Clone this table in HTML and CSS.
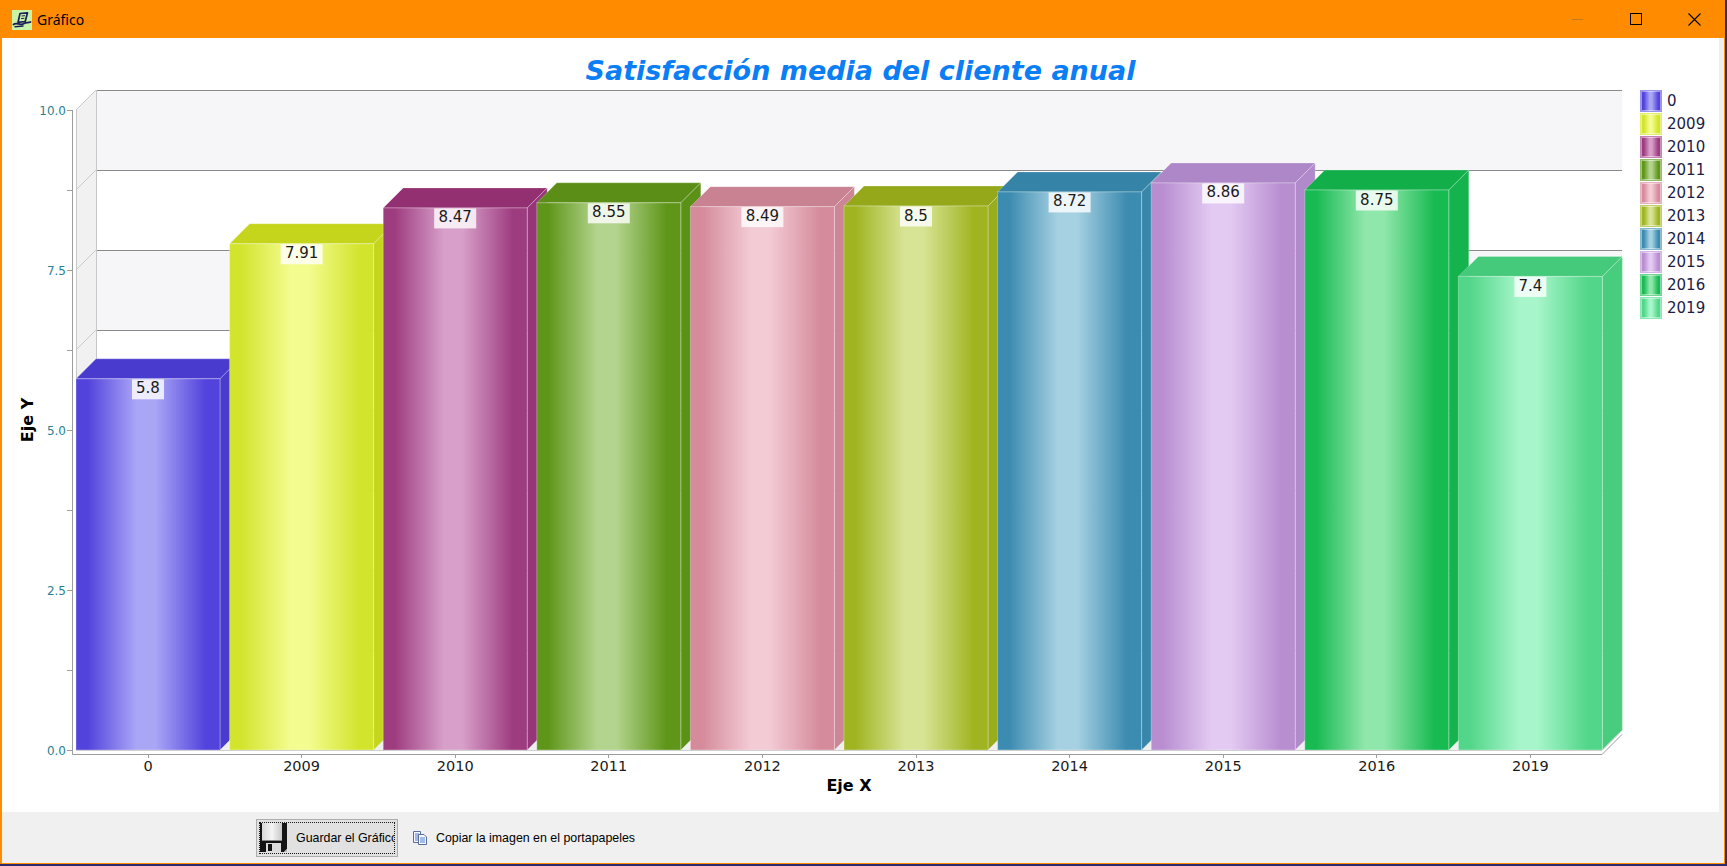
FILE: index.html
```html
<!DOCTYPE html>
<html lang="es">
<head>
<meta charset="utf-8">
<title>Gráfico</title>
<link rel="stylesheet" href="styles.css">
</head>
<body>
<div class="window">
  <div class="titlebar">
    <svg class="app-icon" width="20" height="20" viewBox="0 0 20 20">
      <rect width="20" height="20" fill="#c9f3a6"/>
      <path d="M8 3.5 L15.5 2.8 L13.2 11.5 L6 12.4 Z" fill="none" stroke="#1b1d58" stroke-width="1.7" stroke-linejoin="round"/>
      <path d="M9.5 6 L13 5.7 M9 8.6 L12.3 8.3" stroke="#1b1d58" stroke-width="1"/>
      <path d="M1.5 14.5 C5 11.5 8 16.5 12 13.5 C14 12 16 13 18.5 12" fill="none" stroke="#1b1d58" stroke-width="1.8" stroke-linecap="round"/>
      <path d="M3 16.8 L11 16" stroke="#1b1d58" stroke-width="1.4" stroke-linecap="round"/>
    </svg>
    <span class="title-text">Gráfico</span>
    <div class="controls">
      <span class="ctl"><svg width="12" height="12" viewBox="0 0 12 12"><path d="M0 6.5 H11" stroke="#c9761c" stroke-width="1"/></svg></span>
      <span class="ctl"><svg width="12" height="12" viewBox="0 0 12 12"><rect x="0.5" y="0.5" width="11" height="11" fill="none" stroke="#000" stroke-width="1"/></svg></span>
      <span class="ctl"><svg width="13" height="13" viewBox="0 0 13 13"><path d="M0.5 0.5 L12.5 12.5 M12.5 0.5 L0.5 12.5" stroke="#000" stroke-width="1.1"/></svg></span>
    </div>
  </div>

  <div class="client">
    <div class="chart-panel">
      <h1 class="chart-title">Satisfacción media del cliente anual</h1>
      <div class="chart-row">
        <svg class="plot" width="1630" height="726" viewBox="2 86 1630 726">
          <defs>
            <linearGradient id="g0" x1="0" x2="1" y1="0" y2="0"><stop offset="0" stop-color="#5243dc"/><stop offset="0.08" stop-color="#5243dc"/><stop offset="0.42" stop-color="#aaa6f6"/><stop offset="0.55" stop-color="#aaa6f6"/><stop offset="0.9" stop-color="#5243dc"/><stop offset="1" stop-color="#5243dc"/></linearGradient>
            <linearGradient id="g1" x1="0" x2="1" y1="0" y2="0"><stop offset="0" stop-color="#d3e42d"/><stop offset="0.08" stop-color="#d3e42d"/><stop offset="0.42" stop-color="#f3fc8e"/><stop offset="0.55" stop-color="#f3fc8e"/><stop offset="0.9" stop-color="#d3e42d"/><stop offset="1" stop-color="#d3e42d"/></linearGradient>
            <linearGradient id="g2" x1="0" x2="1" y1="0" y2="0"><stop offset="0" stop-color="#9e3c80"/><stop offset="0.08" stop-color="#9e3c80"/><stop offset="0.42" stop-color="#d79fc9"/><stop offset="0.55" stop-color="#d79fc9"/><stop offset="0.9" stop-color="#9e3c80"/><stop offset="1" stop-color="#9e3c80"/></linearGradient>
            <linearGradient id="g3" x1="0" x2="1" y1="0" y2="0"><stop offset="0" stop-color="#5f9619"/><stop offset="0.08" stop-color="#5f9619"/><stop offset="0.42" stop-color="#b3d48e"/><stop offset="0.55" stop-color="#b3d48e"/><stop offset="0.9" stop-color="#5f9619"/><stop offset="1" stop-color="#5f9619"/></linearGradient>
            <linearGradient id="g4" x1="0" x2="1" y1="0" y2="0"><stop offset="0" stop-color="#d58b9b"/><stop offset="0.08" stop-color="#d58b9b"/><stop offset="0.42" stop-color="#f3cbd5"/><stop offset="0.55" stop-color="#f3cbd5"/><stop offset="0.9" stop-color="#d58b9b"/><stop offset="1" stop-color="#d58b9b"/></linearGradient>
            <linearGradient id="g5" x1="0" x2="1" y1="0" y2="0"><stop offset="0" stop-color="#a0b421"/><stop offset="0.08" stop-color="#a0b421"/><stop offset="0.42" stop-color="#d8e495"/><stop offset="0.55" stop-color="#d8e495"/><stop offset="0.9" stop-color="#a0b421"/><stop offset="1" stop-color="#a0b421"/></linearGradient>
            <linearGradient id="g6" x1="0" x2="1" y1="0" y2="0"><stop offset="0" stop-color="#3c8bb0"/><stop offset="0.08" stop-color="#3c8bb0"/><stop offset="0.42" stop-color="#a6d1e2"/><stop offset="0.55" stop-color="#a6d1e2"/><stop offset="0.9" stop-color="#3c8bb0"/><stop offset="1" stop-color="#3c8bb0"/></linearGradient>
            <linearGradient id="g7" x1="0" x2="1" y1="0" y2="0"><stop offset="0" stop-color="#b88ed1"/><stop offset="0.08" stop-color="#b88ed1"/><stop offset="0.42" stop-color="#e3caf2"/><stop offset="0.55" stop-color="#e3caf2"/><stop offset="0.9" stop-color="#b88ed1"/><stop offset="1" stop-color="#b88ed1"/></linearGradient>
            <linearGradient id="g8" x1="0" x2="1" y1="0" y2="0"><stop offset="0" stop-color="#18ba52"/><stop offset="0.08" stop-color="#18ba52"/><stop offset="0.42" stop-color="#90e7ab"/><stop offset="0.55" stop-color="#90e7ab"/><stop offset="0.9" stop-color="#18ba52"/><stop offset="1" stop-color="#18ba52"/></linearGradient>
            <linearGradient id="g9" x1="0" x2="1" y1="0" y2="0"><stop offset="0" stop-color="#52d689"/><stop offset="0.08" stop-color="#52d689"/><stop offset="0.42" stop-color="#a7f5ca"/><stop offset="0.55" stop-color="#a7f5ca"/><stop offset="0.9" stop-color="#52d689"/><stop offset="1" stop-color="#52d689"/></linearGradient>
          </defs>

          <!-- back wall -->
          <rect class="wall-white" x="96" y="90" width="1526" height="640"/>
          <rect class="band" x="96" y="90" width="1526" height="80"/>
          <rect class="band" x="96" y="250" width="1526" height="80"/>
          <rect class="band" x="96" y="410" width="1526" height="80"/>
          <rect class="band" x="96" y="570" width="1526" height="80"/>
          <!-- left wall -->
          <polygon class="side-wall" points="76,110 96,90 96,730 76,750"/>
          <!-- floor -->
          <polygon class="floor" points="76,750 96,730 1622,730 1602,750"/>
          <!-- grid lines -->
          <g class="grid">
            <path d="M96 90.5 H1622 M96 170.5 H1622 M96 250.5 H1622 M96 330.5 H1622 M96 410.5 H1622 M96 490.5 H1622 M96 570.5 H1622 M96 650.5 H1622 M96 730.5 H1622"/>
          </g>
          <g class="grid-side">
            <path d="M76 110 L96 90 M76 190 L96 170 M76 270 L96 250 M76 350 L96 330 M76 430 L96 410 M76 510 L96 490 M76 590 L96 570 M76 670 L96 650"/>
            <path d="M76.5 110 V750 M96.5 90 V730"/>
          </g>

          <!-- bars -->
          <g transform="translate(76 378.8)">
            <polygon class="face" fill="#4a3bcf" points="0,0 20,-20 164,-20 144,0"/>
            <polygon class="face" fill="#4a3bcf" points="144,0 164,-20 164,351.2 144,371.2"/>
            <rect class="front" fill="url(#g0)" width="144" height="371.2"/>
            <rect class="vbox" x="56" y="0.5" width="32" height="20"/>
            <text class="vlabel" x="72" y="14.5">5.8</text>
          </g>
          <g transform="translate(229.6 243.76)">
            <polygon class="face" fill="#c5d51c" points="0,0 20,-20 164,-20 144,0"/>
            <polygon class="face" fill="#c5d51c" points="144,0 164,-20 164,486.24 144,506.24"/>
            <rect class="front" fill="url(#g1)" width="144" height="506.24"/>
            <rect class="vbox" x="51" y="0.5" width="42" height="20"/>
            <text class="vlabel" x="72" y="14.5">7.91</text>
          </g>
          <g transform="translate(383.2 207.92)">
            <polygon class="face" fill="#923072" points="0,0 20,-20 164,-20 144,0"/>
            <polygon class="face" fill="#963578" points="144,0 164,-20 164,522.08 144,542.08"/>
            <rect class="front" fill="url(#g2)" width="144" height="542.08"/>
            <rect class="vbox" x="51" y="0.5" width="42" height="20"/>
            <text class="vlabel" x="72" y="14.5">8.47</text>
          </g>
          <g transform="translate(536.8 202.8)">
            <polygon class="face" fill="#5a8e16" points="0,0 20,-20 164,-20 144,0"/>
            <polygon class="face" fill="#5c9118" points="144,0 164,-20 164,527.2 144,547.2"/>
            <rect class="front" fill="url(#g3)" width="144" height="547.2"/>
            <rect class="vbox" x="51" y="0.5" width="42" height="20"/>
            <text class="vlabel" x="72" y="14.5">8.55</text>
          </g>
          <g transform="translate(690.4 206.64)">
            <polygon class="face" fill="#c98292" points="0,0 20,-20 164,-20 144,0"/>
            <polygon class="face" fill="#cd8696" points="144,0 164,-20 164,523.36 144,543.36"/>
            <rect class="front" fill="url(#g4)" width="144" height="543.36"/>
            <rect class="vbox" x="51" y="0.5" width="42" height="20"/>
            <text class="vlabel" x="72" y="14.5">8.49</text>
          </g>
          <g transform="translate(844 206)">
            <polygon class="face" fill="#94a81a" points="0,0 20,-20 164,-20 144,0"/>
            <polygon class="face" fill="#98ac1c" points="144,0 164,-20 164,524 144,544"/>
            <rect class="front" fill="url(#g5)" width="144" height="544"/>
            <rect class="vbox" x="56" y="0.5" width="32" height="20"/>
            <text class="vlabel" x="72" y="14.5">8.5</text>
          </g>
          <g transform="translate(997.6 191.92)">
            <polygon class="face" fill="#3584a7" points="0,0 20,-20 164,-20 144,0"/>
            <polygon class="face" fill="#3887ab" points="144,0 164,-20 164,538.08 144,558.08"/>
            <rect class="front" fill="url(#g6)" width="144" height="558.08"/>
            <rect class="vbox" x="51" y="0.5" width="42" height="20"/>
            <text class="vlabel" x="72" y="14.5">8.72</text>
          </g>
          <g transform="translate(1151.2 182.96)">
            <polygon class="face" fill="#ad87c7" points="0,0 20,-20 164,-20 144,0"/>
            <polygon class="face" fill="#b18acb" points="144,0 164,-20 164,547.04 144,567.04"/>
            <rect class="front" fill="url(#g7)" width="144" height="567.04"/>
            <rect class="vbox" x="51" y="0.5" width="42" height="20"/>
            <text class="vlabel" x="72" y="14.5">8.86</text>
          </g>
          <g transform="translate(1304.8 190)">
            <polygon class="face" fill="#12ae4a" points="0,0 20,-20 164,-20 144,0"/>
            <polygon class="face" fill="#14b34d" points="144,0 164,-20 164,540 144,560"/>
            <rect class="front" fill="url(#g8)" width="144" height="560"/>
            <rect class="vbox" x="51" y="0.5" width="42" height="20"/>
            <text class="vlabel" x="72" y="14.5">8.75</text>
          </g>
          <g transform="translate(1458.4 276.4)">
            <polygon class="face" fill="#45c97a" points="0,0 20,-20 164,-20 144,0"/>
            <polygon class="face" fill="#48cc7d" points="144,0 164,-20 164,453.6 144,473.6"/>
            <rect class="front" fill="url(#g9)" width="144" height="473.6"/>
            <rect class="vbox" x="56" y="0.5" width="32" height="20"/>
            <text class="vlabel" x="72" y="14.5">7.4</text>
          </g>

          <!-- axes -->
          <g class="axis">
            <path d="M72.5 110 V754.5 H1602 L1622 734.5"/>
            <path d="M67 110.5 H72 M67 190.5 H72 M67 270.5 H72 M67 350.5 H72 M67 430.5 H72 M67 510.5 H72 M67 590.5 H72 M67 670.5 H72 M67 750.5 H72"/>
            <path d="M148.5 754 V758 M301.5 754 V758 M455.5 754 V758 M608.5 754 V758 M762.5 754 V758 M916.5 754 V758 M1069.5 754 V758 M1223.5 754 V758 M1376.5 754 V758 M1530.5 754 V758"/>
          </g>
          <path class="floor-edge" d="M76 750.5 H1602 L1620 732.5"/>

          <g class="ytick">
            <text x="66" y="114.5">10.0</text>
            <text x="66" y="274.5">7.5</text>
            <text x="66" y="434.5">5.0</text>
            <text x="66" y="594.5">2.5</text>
            <text x="66" y="754.5">0.0</text>
          </g>
          <g class="xtick">
            <text x="148" y="771">0</text>
            <text x="301.6" y="771">2009</text>
            <text x="455.2" y="771">2010</text>
            <text x="608.8" y="771">2011</text>
            <text x="762.4" y="771">2012</text>
            <text x="916" y="771">2013</text>
            <text x="1069.6" y="771">2014</text>
            <text x="1223.2" y="771">2015</text>
            <text x="1376.8" y="771">2016</text>
            <text x="1530.4" y="771">2019</text>
          </g>
          <text class="axis-title" x="849" y="791">Eje X</text>
          <text class="axis-title" transform="translate(33 420) rotate(-90)">Eje Y</text>
        </svg>

        <ul class="legend">
          <li><span class="sw c0"></span><span class="lt">0</span></li>
          <li><span class="sw c1"></span><span class="lt">2009</span></li>
          <li><span class="sw c2"></span><span class="lt">2010</span></li>
          <li><span class="sw c3"></span><span class="lt">2011</span></li>
          <li><span class="sw c4"></span><span class="lt">2012</span></li>
          <li><span class="sw c5"></span><span class="lt">2013</span></li>
          <li><span class="sw c6"></span><span class="lt">2014</span></li>
          <li><span class="sw c7"></span><span class="lt">2015</span></li>
          <li><span class="sw c8"></span><span class="lt">2016</span></li>
          <li><span class="sw c9"></span><span class="lt">2019</span></li>
        </ul>
      </div>
    </div>

    <div class="toolbar">
      <button class="btn-save" type="button">
        <span class="focus">
          <svg class="floppy" width="28" height="30" viewBox="0 0 28 30">
            <defs>
              <linearGradient id="fl" x1="0" x2="1" y1="0" y2="0">
                <stop offset="0" stop-color="#d8d8d8"/>
                <stop offset="0.5" stop-color="#f4f4f4"/>
                <stop offset="1" stop-color="#c8c8c8"/>
              </linearGradient>
            </defs>
            <path d="M0 0 H27 V26 L24 29 H0 Z" fill="#141414"/>
            <rect x="2" y="0" width="20" height="17" fill="url(#fl)"/>
            <rect x="2" y="17" width="20" height="1" fill="#8a8a8a"/>
            <rect x="6" y="20" width="15" height="9" fill="#dcdcdc"/>
            <rect x="8" y="21" width="4" height="7" fill="#141414"/>
            <path d="M24 29 L27 26 V29 Z" fill="#b9b9b9"/>
          </svg>
          <span class="btn-text">Guardar el Gráfico</span>
        </span>
      </button>
      <button class="btn-copy" type="button">
        <svg class="copy-ico" width="16" height="16" viewBox="0 0 16 16">
          <path d="M1.5 1.5 H8.5 V12.5 H1.5 Z" fill="#f4f6fb" stroke="#5a6e9c"/>
          <path d="M3 4 H7 M3 6 H7 M3 8 H7 M3 10 H6" stroke="#4a7fd0"/>
          <path d="M6.5 4.5 H12 L14.5 7 V14.5 H6.5 Z" fill="#f8f9fc" stroke="#5a6e9c"/>
          <path d="M8 8 H13 M8 10 H13 M8 12 H13" stroke="#4a7fd0"/>
        </svg>
        <span class="btn-text">Copiar la imagen en el portapapeles</span>
      </button>
    </div>
  </div>
</div>
</body>
</html>
```

FILE: styles.css
```css
html, body {
  margin: 0;
  padding: 0;
}

body {
  width: 1727px;
  height: 866px;
  overflow: hidden;
  background: #2e2a6c;
}

.window {
  width: 1725px;
  height: 864px;
  background: #ff8c00;
  display: flex;
  flex-direction: column;
}

/* ---------- title bar ---------- */
.titlebar {
  height: 38px;
  flex: 0 0 38px;
  display: flex;
  align-items: center;
}

.app-icon {
  margin-left: 12px;
  margin-top: 2px;
  flex: 0 0 20px;
}

.title-text {
  margin-left: 5px;
  font-family: "Noto Sans", "Open Sans", sans-serif;
  font-size: 14px;
  color: #000;
  margin-top: 1px;
}

.controls {
  margin-left: auto;
  margin-right: 2px;
  display: flex;
  height: 38px;
}

.ctl {
  width: 58px;
  height: 38px;
  display: flex;
  align-items: center;
  justify-content: center;
}

/* ---------- client area ---------- */
.client {
  margin-left: 2px;
  width: 1722px;
  height: 825px;
  background: #f0f0f0;
  display: flex;
  flex-direction: column;
}

.chart-panel {
  width: 1717px;
  height: 774px;
  flex: 0 0 774px;
  background: #ffffff;
  display: flex;
  flex-direction: column;
}

.chart-title {
  margin: 0;
  height: 48px;
  flex: 0 0 48px;
  box-sizing: border-box;
  padding-top: 17px;
  font-family: "DejaVu Sans", Verdana, sans-serif;
  font-style: italic;
  font-weight: bold;
  font-size: 27px;
  line-height: 32px;
  text-align: center;
  color: #0b7ef5;
  white-space: nowrap;
}

.chart-row {
  display: flex;
  height: 726px;
}

.plot {
  display: block;
  flex: 0 0 1630px;
}

/* svg parts */
.wall-white { fill: #ffffff; }
.band { fill: #f6f6f8; }
.side-wall { fill: #f1f1f1; }
.floor { fill: #efefef; }

.grid path {
  fill: none;
  stroke: #8a8a8a;
  stroke-width: 1;
}

.grid-side path {
  fill: none;
  stroke: #c8c8c8;
  stroke-width: 1;
}

.face {
  stroke: rgba(255, 255, 255, 0.25);
  stroke-width: 1;
}

.front {
  stroke: rgba(255, 255, 255, 0.3);
  stroke-width: 1;
}

.vbox {
  fill: rgba(255, 255, 255, 0.8);
}

.vlabel {
  font-family: "DejaVu Sans", Verdana, sans-serif;
  font-size: 15px;
  fill: #1a1a1a;
  text-anchor: middle;
}

.axis path {
  fill: none;
  stroke: #9c9c9c;
  stroke-width: 1;
}

.floor-edge {
  fill: none;
  stroke: #d0d0d0;
  stroke-width: 1;
}

.ytick text {
  font-family: "DejaVu Sans", Verdana, sans-serif;
  font-size: 12px;
  fill: #2a8290;
  text-anchor: end;
}

.xtick text {
  font-family: "DejaVu Sans", Verdana, sans-serif;
  font-size: 14.5px;
  fill: #1a1a1a;
  text-anchor: middle;
}

.axis-title {
  font-family: "DejaVu Sans", Verdana, sans-serif;
  font-weight: bold;
  font-size: 16px;
  fill: #000;
  text-anchor: middle;
}

/* ---------- legend ---------- */
.legend {
  list-style: none;
  margin: 0;
  padding: 5px 0 0 9px;
  flex: 1 1 auto;
}

.legend li {
  display: flex;
  align-items: center;
  height: 20px;
  margin-bottom: 3px;
  gap: 6px;
}

.sw {
  width: 20px;
  height: 20px;
  box-sizing: border-box;
  border: 1px solid rgba(255, 255, 255, 0.45);
  background: linear-gradient(90deg, var(--d) 0%, var(--d) 10%, var(--l) 42%, var(--l) 55%, var(--d) 90%, var(--d) 100%);
  outline: 1px solid var(--o);
}

.lt {
  font-family: "DejaVu Sans", Verdana, sans-serif;
  font-size: 15px;
  line-height: 20px;
  color: #1c1c46;
}

.c0 { --d: #5243dc; --l: #aaa6f6; --o: #9a93f0; }
.c1 { --d: #d3e42d; --l: #f3fc8e; --o: #e4ef70; }
.c2 { --d: #9e3c80; --l: #d79fc9; --o: #c584b4; }
.c3 { --d: #5f9619; --l: #b3d48e; --o: #95bc66; }
.c4 { --d: #d58b9b; --l: #f3cbd5; --o: #e6b0bd; }
.c5 { --d: #a0b421; --l: #d8e495; --o: #c2d06a; }
.c6 { --d: #3c8bb0; --l: #a6d1e2; --o: #82b8d0; }
.c7 { --d: #b88ed1; --l: #e3caf2; --o: #d3b4e6; }
.c8 { --d: #18ba52; --l: #90e7ab; --o: #6cd68f; }
.c9 { --d: #52d689; --l: #a7f5ca; --o: #8ae8b2; }

/* ---------- toolbar ---------- */
.toolbar {
  flex: 1 1 auto;
  display: flex;
  align-items: flex-start;
  padding: 7px 0 0 254px;
  font-family: "Liberation Sans", Arial, sans-serif;
  font-size: 12.4px;
  color: #000;
}

.btn-save {
  width: 142px;
  height: 38px;
  box-sizing: border-box;
  margin: 0;
  padding: 2px;
  border: 1px solid #adadad;
  background: #e1e1e1;
  font: inherit;
  color: inherit;
  display: flex;
}

.focus {
  flex: 1 1 auto;
  display: flex;
  align-items: center;
  border: 1px dotted #1a1a1a;
  overflow: hidden;
  white-space: nowrap;
}

.floppy {
  flex: 0 0 28px;
  margin-right: 8px;
}

.btn-copy {
  margin: 0 0 0 14px;
  padding: 0;
  height: 38px;
  border: none;
  background: transparent;
  font: inherit;
  color: inherit;
  display: flex;
  align-items: center;
  white-space: nowrap;
}

.copy-ico {
  flex: 0 0 16px;
  margin-right: 8px;
}

.btn-text {
  line-height: 14px;
}
```
